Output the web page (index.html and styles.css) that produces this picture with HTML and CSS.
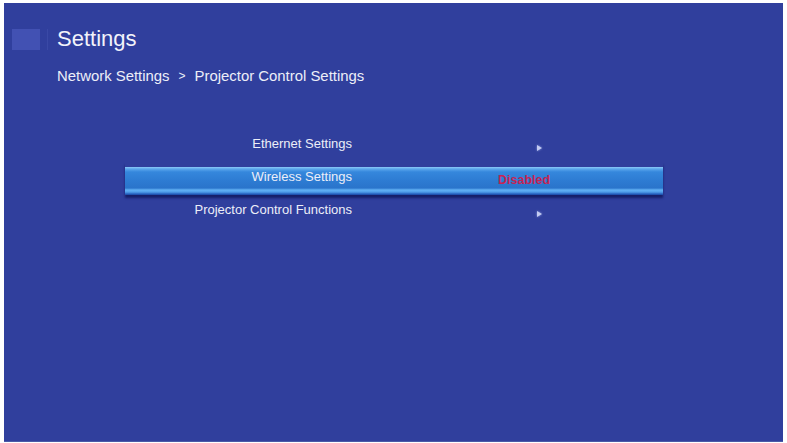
FILE: index.html
```html
<!DOCTYPE html>
<html lang="en">
<head>
<meta charset="utf-8">
<title>Settings</title>
<link rel="stylesheet" href="styles.css">
</head>
<body>
<div class="screen">
  <header class="header">
    <span class="logo"></span>
    <span class="divider"></span>
    <h1 class="title">Settings</h1>
  </header>
  <nav class="crumbs">
    <span>Network Settings</span>
    <span class="sep">&gt;</span>
    <span>Projector Control Settings</span>
  </nav>
  <ul class="menu">
    <li class="row">
      <span class="label">Ethernet Settings</span>
      <span class="value"></span>
      <span class="arrow"></span>
    </li>
    <li class="row row-selected">
      <span class="label">Wireless Settings</span>
      <span class="value value-off">Disabled</span>
      <span class="arrow arrow-none"></span>
    </li>
    <li class="row">
      <span class="label">Projector Control Functions</span>
      <span class="value"></span>
      <span class="arrow"></span>
    </li>
  </ul>
</div>
</body>
</html>
```
FILE: styles.css
```css
html, body {
  margin: 0;
  padding: 0;
  background: #ffffff;
}

body {
  font-family: "Liberation Sans", Arial, sans-serif;
  color: #eceef8;
}

.screen {
  margin: 3px 4px 0 4px;
  height: 439px;
  background: #303f9d;
  border-bottom: 1px solid #4a5aa8;
  box-sizing: border-box;
  padding-top: 23px;
}

.header {
  display: flex;
  align-items: center;
  height: 26px;
}

.logo {
  width: 28px;
  height: 21px;
  margin-left: 8px;
  background: #4251b3;
}

.divider {
  width: 1px;
  height: 21px;
  margin-left: 7px;
  background: #3a49a6;
}

.title {
  margin: 0 0 0 9px;
  font-size: 22px;
  font-weight: normal;
  line-height: 26px;
  color: #f2f3fa;
}

.crumbs {
  margin: 15px 0 0 53px;
  font-size: 14.9px;
  line-height: 18px;
  display: flex;
  gap: 9px;
}

.sep {
  font-size: 12px;
}

.menu {
  list-style: none;
  margin: 44px 0 0 121px;
  padding: 0;
  width: 538px;
}

.row {
  display: grid;
  grid-template-columns: 227px 148px 37px 1fr;
  height: 33px;
  box-sizing: border-box;
  border-top: 5px solid transparent;
  font-size: 13px;
  line-height: 16px;
}

.row-selected {
  background-clip: padding-box;
  background-image: linear-gradient(to bottom,
    #8ccaf8 0px, #5aa6ec 2px, #3587dc 5px, #2d7bd2 14px,
    #2a74cb 21px, #62b2f4 23px, #4f9ee9 25px, #2560bf 27px, #1b46a0 28px);
  box-shadow: 0 3px 2px rgba(20, 28, 100, 0.9);
}

.label {
  grid-column: 1;
  text-align: right;
  padding-top: 2px;
}

.value {
  grid-column: 3;
  padding-top: 6px;
  font-size: 12.5px;
  font-weight: bold;
  line-height: 14px;
  white-space: nowrap;
}

.value-off {
  color: #c62454;
  margin-left: -2px;
}

.arrow {
  grid-column: 4;
  align-self: start;
  margin-top: 11px;
  width: 0;
  height: 0;
  border-top: 3px solid transparent;
  border-bottom: 3px solid transparent;
  border-left: 5px solid #c4ccf2;
  filter: drop-shadow(0 0 1px #8c9be0);
}

.arrow-none {
  display: none;
}
```
